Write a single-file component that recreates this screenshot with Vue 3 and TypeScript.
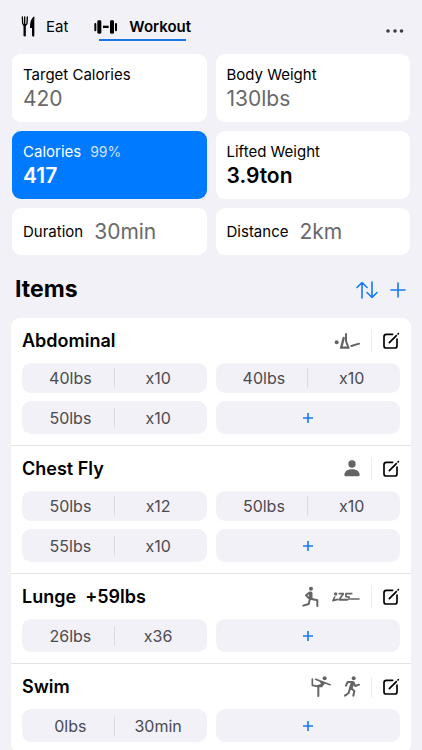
<script setup lang="ts">
import { ref } from 'vue'

type Figure = 'situp' | 'person' | 'lunge' | 'plank' | 'balance' | 'run'

interface Stat {
  label: string
  value: string
  note?: string
  tone?: 'active' | 'strong'
  inline?: boolean
}

interface WorkoutItem {
  name: string
  extra?: string
  figures: Figure[]
  sets: { amount: string; count: string }[]
}

const tab = ref<'eat' | 'workout'>('workout')

const stats: Stat[] = [
  { label: 'Target Calories', value: '420' },
  { label: 'Body Weight', value: '130lbs' },
  { label: 'Calories', value: '417', note: '99%', tone: 'active' },
  { label: 'Lifted Weight', value: '3.9ton', tone: 'strong' },
  { label: 'Duration', value: '30min', inline: true },
  { label: 'Distance', value: '2km', inline: true },
]

const items: WorkoutItem[] = [
  {
    name: 'Abdominal',
    figures: ['situp'],
    sets: [
      { amount: '40lbs', count: 'x10' },
      { amount: '40lbs', count: 'x10' },
      { amount: '50lbs', count: 'x10' },
    ],
  },
  {
    name: 'Chest Fly',
    figures: ['person'],
    sets: [
      { amount: '50lbs', count: 'x12' },
      { amount: '50lbs', count: 'x10' },
      { amount: '55lbs', count: 'x10' },
    ],
  },
  {
    name: 'Lunge',
    extra: '+59lbs',
    figures: ['lunge', 'plank'],
    sets: [{ amount: '26lbs', count: 'x36' }],
  },
  {
    name: 'Swim',
    figures: ['balance', 'run'],
    sets: [{ amount: '0lbs', count: '30min' }],
  },
]
</script>

<template>
  <main class="app">
    <header class="topbar">
      <nav class="tabs">
        <button class="tab" :class="{ current: tab === 'eat' }" type="button" @click="tab = 'eat'">
          <svg class="fork" viewBox="0 0 42 63" width="14" height="21" aria-hidden="true">
            <path d="M4 3 L5 22 Q6 27 11 28 Q17 27 18 22 L19 3 M11 3 V26" class="tines" />
            <path d="M11 28 V58" class="handle" />
            <path d="M40 1 V58 Q40 62 37 62 Q33 62 33 58 V36 H27 Q26 10 40 1Z" class="solid" />
          </svg>
          <span>Eat</span>
        </button>
        <button class="tab" :class="{ current: tab === 'workout' }" type="button" @click="tab = 'workout'">
          <svg class="dumbbell" viewBox="0 0 72 42" width="24" height="14" aria-hidden="true">
            <rect x="1" y="9" width="6" height="25" rx="3" />
            <rect x="10" y="1" width="12" height="40" rx="4" />
            <rect x="27" y="17" width="17" height="7" />
            <rect x="48" y="1" width="12" height="40" rx="4" />
            <rect x="63" y="9" width="6" height="25" rx="3" />
          </svg>
          <span>Workout</span>
        </button>
      </nav>
      <button class="more" type="button" aria-label="More">
        <svg viewBox="0 0 18 6" width="18" height="6" aria-hidden="true">
          <circle cx="2" cy="3" r="1.8" />
          <circle cx="9" cy="3" r="1.8" />
          <circle cx="15.5" cy="3" r="1.8" />
        </svg>
      </button>
    </header>

    <section class="stats">
      <div v-for="s in stats" :key="s.label" class="stat" :class="[s.tone, { inline: s.inline }]">
        <div class="stat-label">
          {{ s.label }}<span v-if="s.note" class="note">{{ s.note }}</span>
        </div>
        <div class="stat-value">{{ s.value }}</div>
      </div>
    </section>

    <div class="heading">
      <h1>Items</h1>
      <div class="actions">
        <button type="button" aria-label="Sort">
          <svg viewBox="0 0 22 18" width="22" height="18" aria-hidden="true">
            <path d="M6 17 V1.5 M1 6.5 L6 1.5 L11 6.5 M16 1 V16.5 M11 11.5 L16 16.5 L21 11.5" />
          </svg>
        </button>
        <button type="button" aria-label="Add item">
          <svg viewBox="0 0 16 16" width="16" height="16" aria-hidden="true">
            <path d="M8 1 V15 M1 8 H15" />
          </svg>
        </button>
      </div>
    </div>

    <section class="list">
      <article v-for="item in items" :key="item.name" class="item">
        <header class="item-head">
          <h2>{{ item.name }}<span v-if="item.extra" class="extra">{{ item.extra }}</span></h2>
          <div class="figures">
            <template v-for="f in item.figures" :key="f">
              <svg v-if="f === 'situp'" class="figure" viewBox="0 0 78 54" width="26" height="18" aria-hidden="true">
                <circle cx="8" cy="31" r="6" class="solid" />
                <path d="M22 46 L29 18 M21 47 H43" />
                <path d="M36 6 V27 L43 46" class="mid" />
                <path d="M52 42 L75 35" class="mid" />
              </svg>
              <svg v-else-if="f === 'person'" class="figure" viewBox="0 0 48 51" width="16" height="17" aria-hidden="true">
                <circle cx="24" cy="12" r="11" class="solid" />
                <path class="solid" d="M1 44 C2 33 12 28 24 28 C36 28 46 33 47 44 Q47 49 42 49 H6 Q1 49 1 44Z" />
              </svg>
              <svg v-else-if="f === 'lunge'" class="figure" viewBox="0 0 51 63" width="17" height="21" aria-hidden="true">
                <circle cx="27" cy="8" r="6" class="solid" />
                <path d="M26 22 V35" class="torso" />
                <path d="M22 20 L12 28 L20 36 M26 38 L46 43 V60 M24 38 L20 54 L4 59" class="mid" />
              </svg>
              <svg v-else-if="f === 'plank'" class="figure" viewBox="0 0 84 30" width="28" height="10" aria-hidden="true">
                <circle cx="11" cy="6" r="5" class="solid" />
                <path d="M8 15 L3 26 L17 22" class="thin" />
                <path d="M22 5 H34 L23 21" class="thin" />
                <path d="M22 23 L46 23" class="mid" />
                <path d="M59 5 H42 V14 M42 14 L51 15 V22" class="thin" />
                <path d="M56 21 H81" class="thin" />
              </svg>
              <svg v-else-if="f === 'balance'" class="figure" viewBox="0 0 60 63" width="20" height="21" aria-hidden="true">
                <circle cx="41" cy="7" r="6" class="solid" />
                <path d="M14 10 L57 26 M4 9 V28 L22 31" class="thin" />
                <path class="solid" d="M25 14 L43 21 L33 34 H18 L17 28 L30 24Z" />
                <path d="M22 31 V60" class="mid" />
              </svg>
              <svg v-else class="figure" viewBox="0 0 48 63" width="16" height="21" aria-hidden="true">
                <circle cx="29" cy="7" r="6" class="solid" />
                <path d="M26 21 L21 34" class="torso" />
                <path d="M24 18 L11 18 L6 29 M28 19 L34 30 L45 26 M20 35 L31 45 L28 59 M18 37 L14 51 L3 59" class="mid" />
              </svg>
            </template>
          </div>
          <span class="rule"></span>
          <button class="edit" type="button" :aria-label="`Edit ${item.name}`">
            <svg viewBox="0 0 51 51" width="17" height="17" aria-hidden="true">
              <path d="M29 7 H10 Q3 7 3 14 V41 Q3 48 10 48 H35 Q42 48 42 41 V21" />
              <path d="M19 32 L40 11" />
              <path d="M45 6 L46 5" />
            </svg>
          </button>
        </header>
        <div class="sets">
          <div v-for="(set, i) in item.sets" :key="i" class="set">
            <span>{{ set.amount }}</span>
            <span>{{ set.count }}</span>
          </div>
          <button class="add" type="button" :aria-label="`Add set to ${item.name}`">
            <svg viewBox="0 0 10 10" width="10" height="10" aria-hidden="true">
              <path d="M5 0 V10 M0 5 H10" />
            </svg>
          </button>
        </div>
      </article>
    </section>
  </main>
</template>

<style>
html,
body {
  background: #f2f1f8;
}
</style>

<style scoped>
.app {
  box-sizing: border-box;
  height: 100vh;
  overflow-y: auto;
  scrollbar-width: none;
  background: #f2f1f8;
  color: #000;
  font-family: Inter, 'Liberation Sans', sans-serif;
  font-size: 15px;
}

button {
  display: flex;
  align-items: center;
  justify-content: center;
  margin: 0;
  padding: 0;
  border: 0;
  background: none;
  color: inherit;
  font: inherit;
  cursor: pointer;
}

svg {
  display: block;
  flex: none;
}

h1,
h2 {
  margin: 0;
}

.topbar {
  display: flex;
  justify-content: space-between;
  height: 54px;
  padding: 0 18px 0 21px;
}

.tabs {
  display: flex;
  gap: 26px;
}

.tab {
  position: relative;
  gap: 11px;
  padding-bottom: 1px;
}

.tab.current {
  font-weight: 600;
}

.tab.current::after {
  content: '';
  position: absolute;
  right: 5px;
  bottom: 13px;
  left: 5px;
  height: 2px;
  background: #1b74e4;
}

.fork path {
  fill: none;
  stroke: #000;
  stroke-linecap: round;
}

.fork .tines {
  stroke-width: 4;
}

.fork .handle {
  stroke-width: 7;
}

.fork .solid {
  fill: #000;
  stroke: none;
}

.more {
  padding-top: 8px;
  fill: #3d3d42;
}

.stats {
  display: grid;
  grid-template-columns: 1fr 1fr;
  gap: 9px;
  padding: 0 12px;
}

.stat {
  padding: 10px 11px;
  border-radius: 9px;
  background: #fff;
}

.stat-label {
  line-height: 22px;
}

.stat-value {
  color: #69696b;
  font-size: 21px;
  line-height: 26px;
}

.stat.strong .stat-value,
.stat.active .stat-value {
  color: #000;
  font-weight: 600;
}

.stat.active {
  background: #007aff;
  color: #fff;
}

.stat.active .stat-value {
  color: #fff;
}

.note {
  margin-left: 9px;
  color: #cfe4ff;
  font-size: 14px;
}

.stat.inline {
  display: flex;
  align-items: center;
  gap: 11px;
  min-height: 27px;
}

.heading {
  display: flex;
  align-items: center;
  justify-content: space-between;
  padding: 18px 16px 12px 15px;
}

.heading h1 {
  font-size: 23px;
  font-weight: 700;
  line-height: 33px;
}

.actions {
  display: flex;
  align-items: center;
  gap: 12px;
}

.actions path,
.add path {
  fill: none;
  stroke: #147bf3;
  stroke-width: 1.6;
  stroke-linecap: round;
  stroke-linejoin: round;
}

.list {
  margin: 0 11px;
  border-radius: 9px;
  background: #fff;
}

.item {
  padding: 0 11px 11px;
}

.item + .item {
  border-top: 1px solid #e3e3e7;
}

.item-head {
  display: flex;
  align-items: center;
  height: 45px;
}

.item-head h2 {
  flex: 1;
  font-size: 18px;
  font-weight: 600;
  line-height: 24px;
}

.extra {
  margin-left: 9px;
}

.figures {
  display: flex;
  align-items: center;
  gap: 13px;
}

.figure path {
  fill: none;
  stroke: #646464;
  stroke-width: 7;
  stroke-linecap: round;
  stroke-linejoin: round;
}

.figure .mid {
  stroke-width: 6;
}

.figure .thin {
  stroke-width: 5;
}

.figure .torso {
  stroke-width: 11;
}

.figure .solid {
  fill: #646464;
  stroke: none;
}

.rule {
  width: 1px;
  height: 22px;
  margin: 0 11px;
  background: #ececef;
}

.edit path {
  fill: none;
  stroke: #000;
  stroke-width: 5;
  stroke-linecap: round;
}

.sets {
  display: grid;
  grid-template-columns: 1fr 1fr;
  gap: 8px 9px;
}

.set,
.add {
  min-height: 30px;
  border-radius: 9px;
  background: #f2f1f8;
}

.set {
  display: flex;
  align-items: center;
  padding: 0 5px;
  color: #4b4b50;
  font-size: 16px;
  line-height: 20px;
}

.set span {
  flex: 1;
  text-align: center;
}

.set span + span {
  border-left: 1px solid #dcdce1;
}

.add {
  min-height: 33px;
}
</style>
